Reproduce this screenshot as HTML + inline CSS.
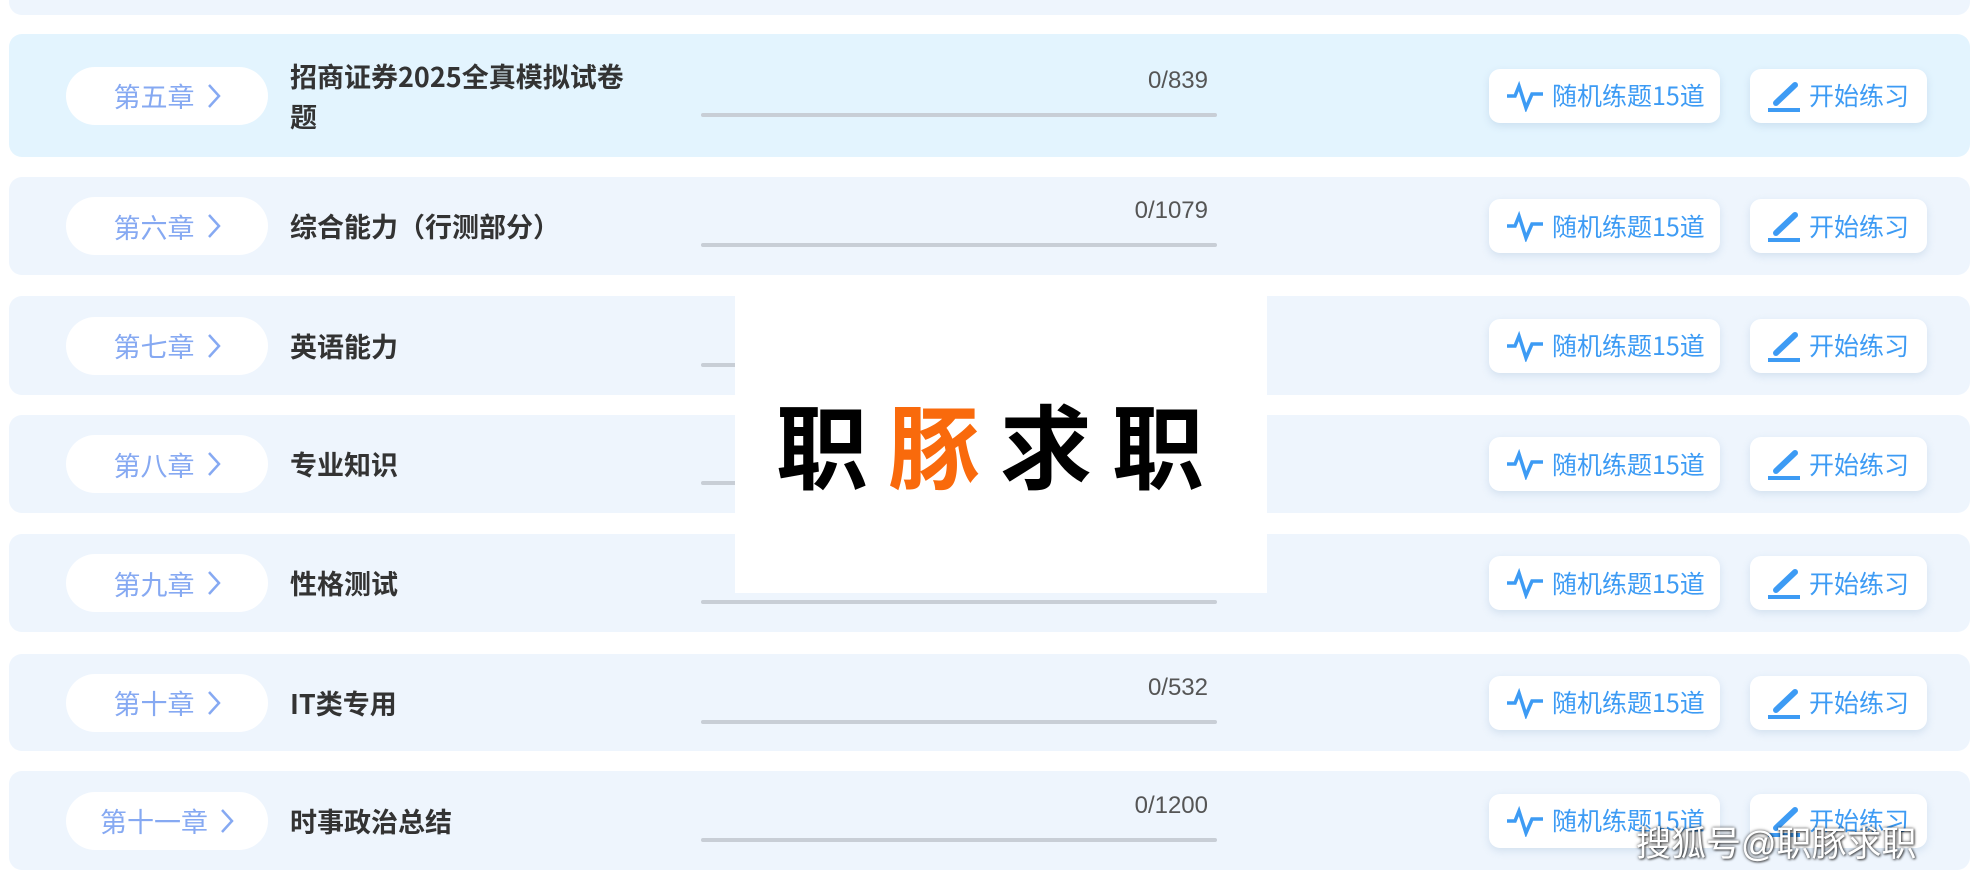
<!DOCTYPE html>
<html><head><meta charset="utf-8"><style>
*{margin:0;padding:0;box-sizing:border-box}
body{width:1979px;height:880px;overflow:hidden;background:#fff;position:relative;font-family:"Liberation Sans","Noto Sans CJK SC",sans-serif}
.row{position:absolute;left:9px;width:1961px;background:#eef5fd;border-radius:13px}
.pill{position:absolute;left:57px;width:202px;height:58px;background:#fff;border-radius:29px;color:#86a9f2;font-size:27px;top:50%;margin-top:-29px;font-family:"Noto Sans CJK SC",sans-serif;display:flex;align-items:center;justify-content:center;line-height:1}
.pill svg{margin-left:12px}
.title{position:absolute;left:281px;font-size:27px;font-weight:bold;color:#333;top:50%;line-height:40px;transform:translateY(-50%);font-family:"Noto Sans CJK SC",sans-serif}
.cnt{position:absolute;right:762px;font-size:24px;color:#555;top:50%;margin-top:-29px}
.bar{position:absolute;left:692px;width:516px;height:4px;background:#c8ced6;border-radius:2px;top:50%;margin-top:17px}
.btn{position:absolute;height:54px;top:50%;margin-top:-27px;background:#fff;border-radius:11px;box-shadow:0 3px 8px rgba(150,180,210,.3);color:#3d9bf4;font-size:25px;display:flex;align-items:center;font-family:"Noto Sans CJK SC",sans-serif;line-height:1}
.b1{left:1480px;width:231px}.b2{left:1741px;width:177px}
.btn svg{margin:0 9px 0 18px}
</style></head><body>
<div class="row" style="top:-20px;height:35px"></div>

<div class="row" style="top:34px;height:123px;background:#e3f4fe">
<div class="pill">第五章<svg width="14" height="26" viewBox="0 0 14 26"><path d="M2 2L12 13L2 24" fill="none" stroke="#86a9f2" stroke-width="2.5"/></svg></div>
<div class="title">招商证券2025全真模拟试卷<br>题</div>
<div class="cnt">0/839</div><div class="bar"></div>
<div class="btn b1"><svg width="36" height="32" viewBox="0 0 36 32"><path d="M0 16H8L12 6L19 28L25 14H36" fill="none" stroke="#3d9bf4" stroke-width="3.5"/></svg>随机练题15道</div>
<div class="btn b2"><svg width="32" height="34" viewBox="0 0 32 34"><path d="M8 24L27 6" stroke="#3d9bf4" stroke-width="6" stroke-linecap="round"/><rect x="0" y="29" width="32" height="4" fill="#3d9bf4"/></svg>开始练习</div>
</div>

<div class="row" style="top:177px;height:98px">
<div class="pill">第六章<svg width="14" height="26" viewBox="0 0 14 26"><path d="M2 2L12 13L2 24" fill="none" stroke="#86a9f2" stroke-width="2.5"/></svg></div>
<div class="title">综合能力（行测部分）</div>
<div class="cnt">0/1079</div><div class="bar"></div>
<div class="btn b1"><svg width="36" height="32" viewBox="0 0 36 32"><path d="M0 16H8L12 6L19 28L25 14H36" fill="none" stroke="#3d9bf4" stroke-width="3.5"/></svg>随机练题15道</div>
<div class="btn b2"><svg width="32" height="34" viewBox="0 0 32 34"><path d="M8 24L27 6" stroke="#3d9bf4" stroke-width="6" stroke-linecap="round"/><rect x="0" y="29" width="32" height="4" fill="#3d9bf4"/></svg>开始练习</div>
</div>

<div class="row" style="top:296px;height:99px">
<div class="pill">第七章<svg width="14" height="26" viewBox="0 0 14 26"><path d="M2 2L12 13L2 24" fill="none" stroke="#86a9f2" stroke-width="2.5"/></svg></div>
<div class="title">英语能力</div>
<div class="bar"></div>
<div class="btn b1"><svg width="36" height="32" viewBox="0 0 36 32"><path d="M0 16H8L12 6L19 28L25 14H36" fill="none" stroke="#3d9bf4" stroke-width="3.5"/></svg>随机练题15道</div>
<div class="btn b2"><svg width="32" height="34" viewBox="0 0 32 34"><path d="M8 24L27 6" stroke="#3d9bf4" stroke-width="6" stroke-linecap="round"/><rect x="0" y="29" width="32" height="4" fill="#3d9bf4"/></svg>开始练习</div>
</div>

<div class="row" style="top:415px;height:98px">
<div class="pill">第八章<svg width="14" height="26" viewBox="0 0 14 26"><path d="M2 2L12 13L2 24" fill="none" stroke="#86a9f2" stroke-width="2.5"/></svg></div>
<div class="title">专业知识</div>
<div class="bar"></div>
<div class="btn b1"><svg width="36" height="32" viewBox="0 0 36 32"><path d="M0 16H8L12 6L19 28L25 14H36" fill="none" stroke="#3d9bf4" stroke-width="3.5"/></svg>随机练题15道</div>
<div class="btn b2"><svg width="32" height="34" viewBox="0 0 32 34"><path d="M8 24L27 6" stroke="#3d9bf4" stroke-width="6" stroke-linecap="round"/><rect x="0" y="29" width="32" height="4" fill="#3d9bf4"/></svg>开始练习</div>
</div>

<div class="row" style="top:534px;height:98px">
<div class="pill">第九章<svg width="14" height="26" viewBox="0 0 14 26"><path d="M2 2L12 13L2 24" fill="none" stroke="#86a9f2" stroke-width="2.5"/></svg></div>
<div class="title">性格测试</div>
<div class="bar"></div>
<div class="btn b1"><svg width="36" height="32" viewBox="0 0 36 32"><path d="M0 16H8L12 6L19 28L25 14H36" fill="none" stroke="#3d9bf4" stroke-width="3.5"/></svg>随机练题15道</div>
<div class="btn b2"><svg width="32" height="34" viewBox="0 0 32 34"><path d="M8 24L27 6" stroke="#3d9bf4" stroke-width="6" stroke-linecap="round"/><rect x="0" y="29" width="32" height="4" fill="#3d9bf4"/></svg>开始练习</div>
</div>

<div class="row" style="top:654px;height:97px">
<div class="pill">第十章<svg width="14" height="26" viewBox="0 0 14 26"><path d="M2 2L12 13L2 24" fill="none" stroke="#86a9f2" stroke-width="2.5"/></svg></div>
<div class="title">IT类专用</div>
<div class="cnt">0/532</div><div class="bar"></div>
<div class="btn b1"><svg width="36" height="32" viewBox="0 0 36 32"><path d="M0 16H8L12 6L19 28L25 14H36" fill="none" stroke="#3d9bf4" stroke-width="3.5"/></svg>随机练题15道</div>
<div class="btn b2"><svg width="32" height="34" viewBox="0 0 32 34"><path d="M8 24L27 6" stroke="#3d9bf4" stroke-width="6" stroke-linecap="round"/><rect x="0" y="29" width="32" height="4" fill="#3d9bf4"/></svg>开始练习</div>
</div>

<div class="row" style="top:771px;height:99px">
<div class="pill">第十一章<svg width="14" height="26" viewBox="0 0 14 26"><path d="M2 2L12 13L2 24" fill="none" stroke="#86a9f2" stroke-width="2.5"/></svg></div>
<div class="title">时事政治总结</div>
<div class="cnt">0/1200</div><div class="bar"></div>
<div class="btn b1"><svg width="36" height="32" viewBox="0 0 36 32"><path d="M0 16H8L12 6L19 28L25 14H36" fill="none" stroke="#3d9bf4" stroke-width="3.5"/></svg>随机练题15道</div>
<div class="btn b2"><svg width="32" height="34" viewBox="0 0 32 34"><path d="M8 24L27 6" stroke="#3d9bf4" stroke-width="6" stroke-linecap="round"/><rect x="0" y="29" width="32" height="4" fill="#3d9bf4"/></svg>开始练习</div>
</div>

<div style="position:absolute;left:735px;top:296px;width:532px;height:297px;background:#fff"></div>
<div style="position:absolute;left:776px;top:388px;font-size:92px;font-weight:bold;line-height:110px;letter-spacing:20px;color:#000;font-family:'Noto Sans CJK SC',sans-serif;white-space:nowrap">职<span style="color:#f96a0c">豚</span>求职</div>

<div style="position:absolute;left:1636px;top:822px;font-size:35px;color:#fff;line-height:46px;white-space:nowrap;text-shadow:0 0 3px rgba(0,0,0,.7),1px 1px 2px rgba(0,0,0,.6)">搜狐号@职豚求职</div>
</body></html>
